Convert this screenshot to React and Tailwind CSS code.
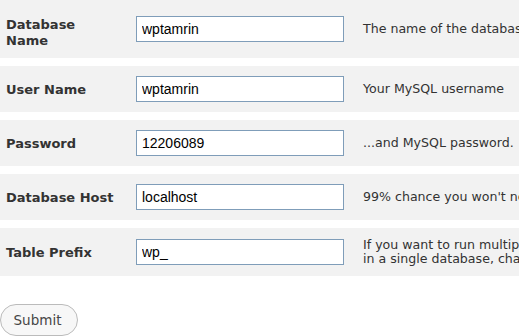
const rows = [
  { label: ['Database', 'Name'], value: 'wptamrin', hint: ['The name of the database you want to run WP in.'], h: 'h-[58px]' },
  { label: ['User Name'], value: 'wptamrin', hint: ['Your MySQL username'], h: 'h-[46px]' },
  { label: ['Password'], value: '12206089', hint: ['...and MySQL password.'], h: 'h-[46px]' },
  { label: ['Database Host'], value: 'localhost', hint: ["99% chance you won't need to change this value."], h: 'h-[46px]' },
  {
    label: ['Table Prefix'],
    value: 'wp_',
    hint: ['If you want to run multiple WordPress installations', 'in a single database, change this.'],
    h: 'h-[48px]',
  },
];

export default function App() {
  return (
    <div className="w-[519px] h-[336px] overflow-hidden bg-white font-['DejaVu_Sans',sans-serif]">
      <div className="flex flex-col gap-2 w-[760px]">
        {rows.map((row, i) => (
          <div key={i} className={`flex items-center bg-[#f2f2f2] ${row.h}`}>
            <div
              className={`w-[136px] shrink-0 pl-[6px] text-[13px] leading-[16px] font-bold text-[#333] ${i === 0 ? 'mt-[7px]' : 'mt-[2px]'}`}
            >
              {row.label.map((l) => (
                <div key={l}>{l}</div>
              ))}
            </div>
            <input
              type="text"
              defaultValue={row.value}
              className="w-[208px] h-[26px] shrink-0 border border-[#7f9db9] bg-white px-[5px] text-[14px] text-black font-['Liberation_Sans',Arial,sans-serif] outline-none"
            />
            <div className="ml-[19px] whitespace-nowrap text-[12.6px] leading-[14px] text-[#333]">
              {row.hint.map((t) => (
                <div key={t}>{t}</div>
              ))}
            </div>
          </div>
        ))}
      </div>
      <div className="mt-[28px]">
        <button className="h-[32px] w-[78px] rounded-full border border-[#bbb] bg-[#f7f7f7] text-[13.5px] text-[#464646] pr-[3px]">
          Submit
        </button>
      </div>
    </div>
  );
}
